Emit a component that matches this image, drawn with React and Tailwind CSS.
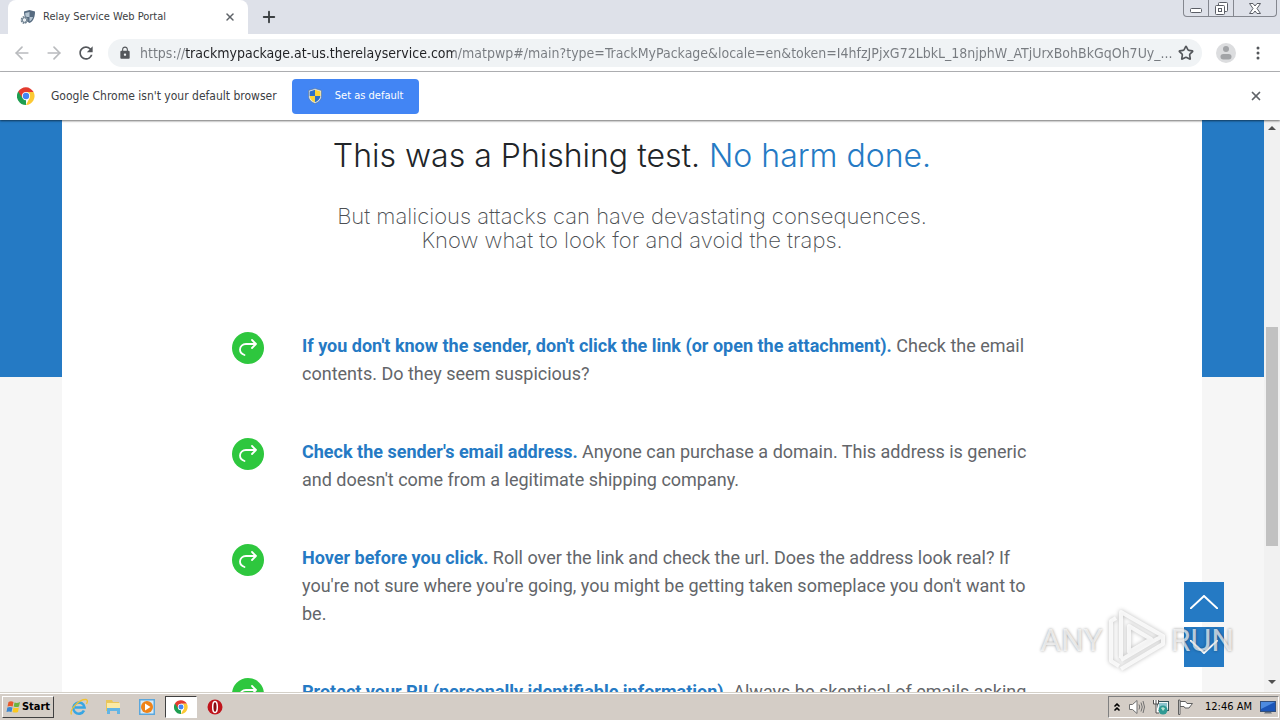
import clsx from "clsx";
import { ArrowLeft, ArrowRight, ChevronUp, Plus, Star, X } from "lucide-react";
import { MdLock, MdRefresh } from "react-icons/md";

const tips = [
  {
    title: "If you don't know the sender, don't click the link (or open the attachment).",
    text: "Check the email contents. Do they seem suspicious?",
  },
  {
    title: "Check the sender's email address.",
    text: "Anyone can purchase a domain. This address is generic and doesn't come from a legitimate shipping company.",
  },
  {
    title: "Hover before you click.",
    text: "Roll over the link and check the url. Does the address look real? If you're not sure where you're going, you might be getting taken someplace you don't want to be.",
  },
  {
    title: "Protect your PII (personally identifiable information).",
    text: "Always be skeptical of emails asking",
  },
];

const url =
  "https://trackmypackage.at-us.therelayservice.com/matpwp#/main?type=TrackMyPackage&locale=en&token=I4hfzJPjxG72LbkL_18njphW_ATjUrxBohBkGqOh7Uy_...";

function ChromeLogo({ className }) {
  return (
    <svg viewBox="0 0 48 48" className={className} aria-hidden="true">
      <path d="M24 24V48A24 24 0 0 1 3.2 12Z" fill="#1e9e50" />
      <path d="M24 13H44.2A24 24 0 0 0 3.2 12L14.5 29.5Z" fill="#e33b2e" />
      <path d="M33.5 29.5 24 48A24 24 0 0 0 44.2 13H24Z" fill="#fcc934" />
      <circle cx="24" cy="24" r="11" fill="#fff" />
      <circle cx="24" cy="24" r="8.5" fill="#4285f4" />
    </svg>
  );
}

function ShieldIcon({ className }) {
  return (
    <svg viewBox="0 0 16 16" className={className} aria-hidden="true">
      <path d="M8 .5 14.5 2.5V8C14.5 12 11 14.5 8 15.5 5 14.5 1.5 12 1.5 8V2.5Z" fill="#dfe6ee" stroke="#56708c" strokeWidth=".6" />
      <path d="M8 1.8V8H2.6V3.4Z" fill="#2c6fc9" />
      <path d="M8 1.8V8H13.4V3.4Z" fill="#fbd437" />
      <path d="M8 8V14.3C5 13 2.8 11 2.6 8Z" fill="#fbd437" />
      <path d="M8 8V14.3C11 13 13.2 11 13.4 8Z" fill="#2c6fc9" />
    </svg>
  );
}

function PortalIcon({ className }) {
  return (
    <svg viewBox="0 0 16 16" className={className} aria-hidden="true">
      <path d="M9.5 1 15 2.5C15 8 13.5 12 9.5 14 6 12 4 8 4 2.5Z" fill="#566b80" />
      <path d="M9.5 3V8H5.8C5.3 6.5 5.2 5 5.2 4Z" fill="#b4c4d1" />
      <path d="M9.5 8H13C12.3 10 11.2 11.5 9.5 12.5Z" fill="#b4c4d1" />
      <circle cx="4.5" cy="11" r="3" fill="#e9eef2" stroke="#6f8190" strokeWidth="1.8" strokeDasharray="1.6 .8" />
      <circle cx="4.5" cy="11" r="2.3" fill="none" stroke="#6f8190" />
    </svg>
  );
}

function TabStrip() {
  return (
    <header className="flex h-[34px] shrink-0 items-start bg-[#dee1e9]">
      <div className="ml-2 flex h-full w-60 items-center rounded-t-lg bg-white px-3">
        <PortalIcon className="size-4" />
        <span className="ml-[7px] text-[11px] text-[#3c4043]">Relay Service Web Portal</span>
        <button className="ml-auto text-[#5f6368]" aria-label="Close tab">
          <X size={12} strokeWidth={3} />
        </button>
      </div>
      <button className="ml-3 flex h-full items-center text-[#3c4043]" aria-label="New tab">
        <Plus size={18} strokeWidth={2.5} />
      </button>
      <div className="mr-[3px] ml-auto flex h-[17px] divide-x divide-[#84878f] rounded-b border border-t-0 border-[#84878f] text-[#5b5e66]">
        <button className="flex w-[25px] items-end justify-center pb-[3px]" aria-label="Minimize">
          <svg viewBox="0 0 12 5" className="h-[5px] w-3">
            <rect x=".5" y=".5" width="11" height="4" rx="1" fill="#fff" stroke="currentColor" />
          </svg>
        </button>
        <button className="flex w-[25px] items-center justify-center" aria-label="Restore">
          <svg viewBox="0 0 13 13" className="size-[13px]" fill="#fff" stroke="currentColor">
            <rect x="3.5" y=".5" width="9" height="9" rx="1" />
            <rect x=".5" y="3.5" width="9" height="9" rx="1" />
            <rect x="3.5" y="6.5" width="3" height="3" />
          </svg>
        </button>
        <button className="flex w-[42px] items-center justify-center" aria-label="Close">
          <svg viewBox="0 0 12 11" className="h-[11px] w-3" fill="#fff" stroke="currentColor">
            <path d="M.5.5H4L6 3 8 .5H11.5L8 5.5 11.5 10.5H8L6 8 4 10.5H.5L4 5.5Z" />
          </svg>
        </button>
      </div>
    </header>
  );
}

function Toolbar() {
  return (
    <nav className="flex h-[38px] shrink-0 items-center border-b border-[#b4b5b8] bg-white px-3">
      <button className="text-[#b9bbbe]" aria-label="Back">
        <ArrowLeft size={20} strokeWidth={2} />
      </button>
      <button className="ml-3 text-[#b9bbbe]" aria-label="Forward">
        <ArrowRight size={20} strokeWidth={2} />
      </button>
      <button className="ml-3 text-[#54575b]" aria-label="Reload">
        <MdRefresh size={20} />
      </button>
      <div className="ml-3 flex h-7 min-w-0 flex-1 items-center rounded-full bg-[#f0f3f5] pr-2 pl-2.5">
        <MdLock size={14} className="shrink-0 text-[#54575b]" />
        {/* only the host part of the address is dark */}
        <input
          type="text"
          aria-label="Address"
          defaultValue={url}
          className="ml-2 min-w-0 flex-1 bg-[linear-gradient(90deg,#777b80_45px,#202124_45px,#202124_314px,#777b80_314px)] bg-clip-text text-sm text-transparent outline-none"
        />
        <button className="ml-0.5 text-[#54575b]" aria-label="Bookmark this page">
          <Star size={16} strokeWidth={2.5} />
        </button>
      </div>
      <button className="ml-3.5" aria-label="Profile">
        <svg viewBox="0 0 20 20" className="size-5">
          <circle cx="10" cy="10" r="10" fill="#dcdddf" />
          <circle cx="10" cy="6" r="3" fill="#a2a4a7" />
          <rect x="4.5" y="11" width="11" height="5.5" rx="2.75" fill="#a2a4a7" />
        </svg>
      </button>
      <button className="ml-3 flex w-5 justify-center" aria-label="Menu">
        <svg viewBox="0 0 4 14" className="h-3.5 w-1" fill="#54575b">
          <circle cx="2" cy="2" r="1.5" />
          <circle cx="2" cy="7" r="1.5" />
          <circle cx="2" cy="12" r="1.5" />
        </svg>
      </button>
    </nav>
  );
}

function InfoBar() {
  return (
    <div className="z-10 flex h-12 shrink-0 items-center bg-white px-[17px] shadow-[0_1px_2px_#00000090]">
      <ChromeLogo className="size-[18px]" />
      <span className="ml-4 text-xs text-[#3c4043]">Google Chrome isn't your default browser</span>
      <button className="ml-[15px] flex h-[35px] w-[127px] items-center justify-center gap-3 rounded bg-[#4285f4] text-[11px] text-white">
        <ShieldIcon className="size-4" />
        Set as default
      </button>
      <button className="ml-auto text-[#5f6368]" aria-label="Dismiss">
        <X size={14} strokeWidth={3} />
      </button>
    </div>
  );
}

function Tip({ title, text }) {
  return (
    <li className="flex items-start gap-[38px]">
      <svg viewBox="0 0 32 32" className="size-8 shrink-0" fill="none" stroke="#fff" strokeWidth="1.8" aria-hidden="true">
        <circle cx="16" cy="16" r="16" fill="#2ec73e" stroke="none" />
        <path d="M12.5 23C9.5 22 8 20 8 17.5C8 14.5 10.5 12 14 12H24M20 8 24 12 20 16" strokeLinecap="round" strokeLinejoin="round" />
      </svg>
      <p>
        <strong className="font-bold text-[#257ac4]">{title}</strong> {text}
      </p>
    </li>
  );
}

function Watermark() {
  return (
    <div className="pointer-events-none absolute right-[46px] bottom-5 flex items-center gap-1 font-['Roboto',sans-serif] text-[32px] text-white/70 [text-shadow:0_0_3px_#00000066]">
      <span>ANY</span>
      <svg viewBox="0 0 60 64" className="h-16 w-[60px] drop-shadow-[0_0_2px_#00000055]" fill="none" stroke="#fff" strokeWidth="4" strokeLinejoin="round">
        <path d="M14 50V4L56 28 48 32M14 4V44M22 18V44L44 31ZM9 10 4 13V53L12 58M14 61 56 36V28M14 52 48 32" strokeOpacity=".8" />
      </svg>
      <span>RUN</span>
    </div>
  );
}

function Page() {
  return (
    <main className="relative flex min-h-0 flex-1 overflow-hidden">
      <div className="min-w-0 flex-1 bg-[linear-gradient(#257ac4_257px,#f6f6f6_257px)]">
        <div className="mx-auto min-h-full max-w-[1140px] bg-white pt-4">
          <h1 className="text-center font-['Inter',sans-serif] text-[32px] leading-10 font-light text-[#212529]">
            This was a Phishing test. <span className="text-[#257ac4]">No harm done.</span>
          </h1>
          <p className="mt-7 text-center font-['Inter',sans-serif] text-[22px] leading-6 font-extralight text-[#4c4f53]">
            But malicious attacks can have devastating consequences.
            <br />
            Know what to look for and avoid the traps.
          </p>
          <ul className="mx-auto mt-20 flex max-w-[800px] flex-col gap-[50px] font-['Roboto',sans-serif] text-lg leading-7 text-[#63666a]">
            {tips.map((tip) => (
              <Tip key={tip.title} {...tip} />
            ))}
          </ul>
        </div>
      </div>

      {/* scrollbar */}
      <div className="flex w-4 shrink-0 flex-col items-center bg-[#f1f1f1]">
        <span className="mt-1.5 border-x-4 border-b-4 border-x-transparent border-b-[#505050]" />
        <span className="mt-[197px] h-[219px] w-3 bg-[#c1c1c1]" />
        <span className="mt-auto mb-2 border-x-4 border-t-4 border-x-transparent border-t-[#505050]" />
      </div>

      <div className="absolute right-14 bottom-[25px] flex flex-col gap-[5px] text-white">
        <button className="flex size-10 items-center justify-center bg-[#257ac4]" aria-label="Scroll up">
          <svg viewBox="0 0 28 14" className="h-3.5 w-7" fill="none" stroke="currentColor" strokeWidth="2">
            <path d="M0 14 14 1 28 14" />
          </svg>
        </button>
        <button className="flex size-10 items-center justify-center bg-[#257ac4]" aria-label="Scroll down">
          <svg viewBox="0 0 28 14" className="h-3.5 w-7" fill="none" stroke="currentColor" strokeWidth="2">
            <path d="M0 0 14 13 28 0" />
          </svg>
        </button>
      </div>
      <Watermark />
    </main>
  );
}

const taskbarApps = [
  {
    name: "Internet Explorer",
    icon: (
      <svg viewBox="0 0 18 18" className="size-[18px]" fill="none">
        <path d="M14 12.5A5.6 5.6 0 1 1 14.5 9.5H5" stroke="#38a6e3" strokeWidth="2.6" />
        <path d="M1.5 16.5C-1 12 9 1 16 1.5 18 2 17.5 4 16.5 6" stroke="#f2c230" strokeWidth="1.3" />
      </svg>
    ),
  },
  {
    name: "Explorer",
    icon: (
      <svg viewBox="0 0 18 18" className="size-[18px]">
        <path d="M2 2H8L9 4H15V13H2Z" fill="#e9c65b" />
        <path d="M3 5H16V11H3Z" fill="#fbeaa5" />
        <path d="M3 16V10H16V16H13V13H6V16Z" fill="#62b5e5" />
      </svg>
    ),
  },
  {
    name: "Media Player",
    icon: (
      <svg viewBox="0 0 18 18" className="size-[18px]">
        <rect x="1" y="1" width="16" height="16" fill="#5ba7dc" />
        <rect x="2.5" y="2.5" width="13" height="13" fill="#d8ebf8" />
        <circle cx="9" cy="9" r="6" fill="#ef8318" />
        <path d="M7 5.5 12.5 9 7 12.5Z" fill="#fff" />
      </svg>
    ),
  },
  { name: "Chrome", active: true, icon: <ChromeLogo className="size-3.5" /> },
  {
    name: "Opera",
    icon: (
      <svg viewBox="0 0 18 18" className="size-[18px]">
        <circle cx="9" cy="9" r="7.5" fill="#c0141c" />
        <ellipse cx="9" cy="9" rx="2.3" ry="5.5" fill="#8a0c12" stroke="#fff" strokeWidth="1.5" />
      </svg>
    ),
  },
];

function Tray() {
  return (
    <div className="ml-auto flex h-[22px] items-center gap-2 border border-t-[#808080] border-r-white border-b-white border-l-[#808080] pr-0.5 pl-1 text-[11px] text-black">
      <button className="flex flex-col" aria-label="Show hidden icons">
        <ChevronUp size={8} strokeWidth={5} />
        <ChevronUp size={8} strokeWidth={5} className="-mt-1" />
      </button>
      <button aria-label="Volume">
        <svg viewBox="0 0 16 16" className="size-4" fill="none" stroke="#707070">
          <path d="M.5 5.5H3.5L8 1.5V14.5L3.5 10.5H.5Z" fill="#fff" />
          <path d="M10 5.5Q11.5 8 10 10.5M12 3.5Q14.5 8 12 12.5M14 2Q17 8 14 14" />
        </svg>
      </button>
      <button aria-label="Network">
        <svg viewBox="0 0 16 16" className="size-4">
          <rect x="4.5" y="2.5" width="11" height="9" fill="#eef6f6" stroke="#35555c" />
          <rect x="6" y="4" width="8" height="6" fill="#8cc5ce" />
          <circle cx="10" cy="11" r="4.5" fill="#2f9a94" />
          <path d="M8 9Q10 7.5 12 9.5L10 12Z" fill="#b8e3cf" />
          <path d="M.5 1V5H5.5V1M3 1V5V14H6" fill="#fff" stroke="#505050" />
        </svg>
      </button>
      <button aria-label="Action Center">
        <svg viewBox="0 0 16 16" className="size-4" fill="#fff" stroke="#606060">
          <path d="M3 2.5H8.5L10 4.5H15.5Q13.5 7 12 9H8L7 7.5H3Z" />
          <path d="M1.5 1H3V15.5H1.5Z" />
        </svg>
      </button>
      <time className="ml-1 whitespace-nowrap">12:46 AM</time>
      <button aria-label="Display">
        <svg viewBox="0 0 16 16" className="size-4">
          <rect x=".5" y="2.5" width="15" height="10" fill="#1c56b8" stroke="#33507c" />
          <path d="M1 3H15L1 10Z" fill="#4d8be0" />
          <path d="M5 13H11L12 14.5H4Z" fill="#6d7680" />
        </svg>
      </button>
    </div>
  );
}

function Taskbar() {
  return (
    <footer className="flex h-7 shrink-0 items-center border-t border-[#d4d0c8] bg-[#d4cdc6] pt-px pr-px shadow-[inset_0_1px_#fff]">
      <button className="ml-0.5 flex h-[22px] w-[52px] items-center justify-center border border-t-white border-r-[#404040] border-b-[#404040] border-l-white text-[11px] font-bold text-black">
        <svg viewBox="0 0 16 16" className="size-4 shrink-0">
          <path d="M2.5 3Q5 1.5 7.5 3L6.7 7.5Q4 6.5 1.5 7.5Z" fill="#e8592b" />
          <path d="M8.5 3.5Q11 4.5 14 3L13 7.5Q10.5 8.5 7.7 7.5Z" fill="#6cb33f" />
          <path d="M1.3 8.5Q4 7.5 6.5 8.5L5.5 13Q3 12 .5 13Z" fill="#3a86d0" />
          <path d="M7.5 8.5Q10 9.5 12.8 8.5L12 13Q9 14 6.5 13Z" fill="#fbc81e" />
        </svg>
        Start
      </button>
      <div className="ml-[9px] flex items-center gap-0.5">
        {taskbarApps.map((app) => (
          <button
            key={app.name}
            aria-label={app.name}
            className={clsx(
              "flex h-[22px] w-8 items-center justify-center",
              app.active && "border border-t-[#404040] border-r-white border-b-white border-l-[#404040] bg-white",
            )}
          >
            {app.icon}
          </button>
        ))}
      </div>
      <Tray />
    </footer>
  );
}

export default function App() {
  return (
    <div className="flex h-screen flex-col overflow-hidden bg-white font-['DejaVu_Sans_Condensed','DejaVu_Sans',sans-serif]">
      <TabStrip />
      <Toolbar />
      <InfoBar />
      <Page />
      <Taskbar />
    </div>
  );
}
